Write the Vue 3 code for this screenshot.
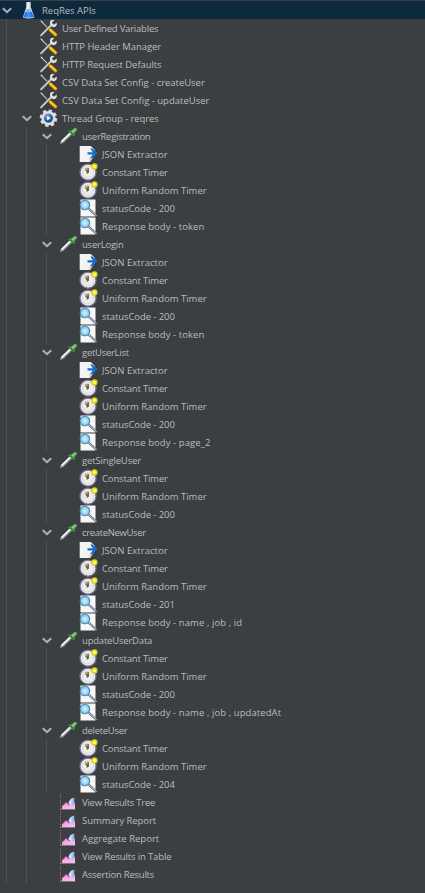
<script setup>
const leaf = (icon, label, tracking) => ({ icon, label, tracking, depth: 3 })
const json = leaf('json', 'JSON Extractor', 0.04)
const timers = [leaf('timer', 'Constant Timer', -0.16), leaf('timer', 'Uniform Random Timer', 0)]
const status = (code) => leaf('assert', `statusCode - ${code}`, -0.08)
const body = (fields) => leaf('assert', `Response body - ${fields}`, 0.08)
const sampler = (label, tracking, children) => [
  { icon: 'sampler', label, tracking, depth: 2, open: true },
  ...children,
]

// tracking: letter spacing of the label, in pixels
const rows = [
  { icon: 'plan', label: 'ReqRes APIs', tracking: -0.03, depth: 0, open: true, selected: true },
  ...[
    ['User Defined Variables', -0.21],
    ['HTTP Header Manager', -0.05],
    ['HTTP Request Defaults', -0.07],
    ['CSV Data Set Config - createUser', -0.03],
    ['CSV Data Set Config - updateUser', 0],
  ].map(([label, tracking]) => ({ icon: 'config', label, tracking, depth: 1 })),
  { icon: 'group', label: 'Thread Group - reqres', tracking: -0.1, depth: 1, open: true },
  ...sampler('userRegistration', -0.27, [json, ...timers, status(200), body('token')]),
  ...sampler('userLogin', -0.22, [json, ...timers, status(200), body('token')]),
  ...sampler('getUserList', -0.28, [json, ...timers, status(200), body('page_2')]),
  ...sampler('getSingleUser', -0.15, [...timers, status(200)]),
  ...sampler('createNewUser', -0.35, [json, ...timers, status(201), body('name , job , id')]),
  ...sampler('updateUserData', -0.2, [...timers, status(200), body('name , job , updatedAt')]),
  ...sampler('deleteUser', -0.3, [...timers, status(204)]),
  ...[
    ['View Results Tree', -0.25],
    ['Summary Report', -0.06],
    ['Aggregate Report', 0],
    ['View Results in Table', -0.14],
    ['Assertion Results', -0.23],
  ].map(([label, tracking]) => ({ icon: 'report', label, tracking, depth: 2, listener: true })),
]
</script>

<template>
  <main class="tree">
    <svg class="defs" width="0" height="0" aria-hidden="true">
      <defs>
        <linearGradient id="flask" x1="0" x2="1">
          <stop offset="0" stop-color="#1c62d4" /><stop offset=".5" stop-color="#3b9bff" /><stop offset="1" stop-color="#1559cd" />
        </linearGradient>
        <radialGradient id="lens"><stop offset="0" stop-color="#d9f5ff" /><stop offset="1" stop-color="#79c2ea" /></radialGradient>
        <radialGradient id="ball" cx=".4" cy=".35"><stop offset="0" stop-color="#9cc5ef" /><stop offset="1" stop-color="#164a91" /></radialGradient>
        <linearGradient id="pink" x1="0" x2="1" y2="1"><stop offset="0" stop-color="#ee98de" /><stop offset="1" stop-color="#ffc0f2" /></linearGradient>
        <linearGradient id="blue" x1="0" x2="1"><stop offset="0" stop-color="#f2f8ff" /><stop offset="1" stop-color="#80abe5" /></linearGradient>
      </defs>
    </svg>
    <div v-for="(row, i) in rows" :key="i" class="row" :class="{ selected: row.selected }">
      <span v-for="g in row.depth" :key="g" class="guide" :class="{ hidden: row.listener && g === 3 }" />
      <span class="toggle">
        <svg v-if="row.open" width="10" height="7" viewBox="0 0 10 7"><path d="M.8 1.2 5 5.2 9.2 1.2" fill="none" stroke="#b0b2b4" stroke-width="2" /></svg>
      </span>
      <svg class="icon" width="20" height="18" viewBox="0 0 20 18">
        <g v-if="row.icon === 'plan'">
          <path d="M7.3 1h4.4v5l3.8 10.5q-6 1.8-11.7 0L7.3 6z" fill="#d5dde6" />
          <path d="M8.4 2h1.2v5l-2 5h-1l1.8-5z" fill="#fff" />
          <path d="M6.2 11h6.7l1.9 5q-5 1.4-10.2 0z" fill="url(#flask)" />
          <path d="M7.5 8h4l1.2 3H6.4z" fill="#8db5de" />
        </g>
        <g v-else-if="row.icon === 'config'">
          <path d="m2 2.2 8.5 8.5" stroke="#c9c9c7" stroke-width="1.1" />
          <path d="m.8 1.6 2.2.3 1.3 2z" fill="#f2f2ef" />
          <path d="M2 16.4 13 5.3" stroke="#737576" stroke-width="2.6" stroke-linecap="round" />
          <path d="M2 16.4 13 5.3" stroke="#dcdcd9" stroke-width="1.3" stroke-linecap="round" />
          <path d="M15.5 1.2q-3.5-1.5-4.6 1.8l.2 3.2 2.4 1.9q3.6.5 4.4-2.4l-.3-2.1-2.5 1.8-1.8-.6-.2-1.6z" fill="#dededb" />
          <path d="m11.5 11.2 5 4.6" stroke="#c78a05" stroke-width="3.3" stroke-linecap="round" />
          <path d="m11.4 10.8 5.1 4.7" stroke="#ffc719" stroke-width="2.3" stroke-linecap="round" />
        </g>
        <g v-else-if="row.icon === 'group'">
          <circle cx="9.5" cy="9.2" r="7.4" fill="none" stroke="#d7dadd" stroke-width="2.8" stroke-dasharray="3.3 2.5" />
          <circle cx="9.5" cy="9.2" r="7.2" fill="#dde1e4" />
          <circle cx="9.5" cy="9.2" r="4.9" fill="#a5b2c0" />
          <circle cx="9.5" cy="9.2" r="4.2" fill="url(#ball)" />
          <path d="m8.2 7 3.4 2.2-3.4 2.2z" fill="#f2f8ff" />
        </g>
        <g v-else-if="row.icon === 'sampler'">
          <path d="m.8 17.2 1.2-3.5L11 5l2.3 2.2-8.5 8.4z" fill="#a5a9a9" />
          <path d="m2.6 14.6 8.6-8.2" stroke="#f6f8f7" stroke-width="1.6" />
          <path d="m4.4 15.2 7.8-7.6" stroke="#65706f" stroke-width=".6" />
          <path d="m9.2 4.4 1.5-1.4 2 .2L15 1q3.4-1 3.4 1.8L15.9 6l.2 1.9-1.4 1.4z" fill="#43883f" />
          <path d="m12.2 4.6 3.4-3.2 2.1.7-3.4 4.2z" fill="#8bcb7b" />
        </g>
        <g v-else-if="row.icon === 'json'">
          <path d="M.7 1h11l3.8 3.5v6L11 17H.7z" fill="#f4f4f4" />
          <path d="m9.5 17 1.5-5 4.5-1.5z" fill="#c5c6c9" />
          <path d="M8.5 7.2h5.2L11.6 4l1.3-1L18.6 8.3l-5.7 5.1-1.3-1 2.1-3H8.5z" fill="#176dcc" />
        </g>
        <g v-else-if="row.icon === 'timer'">
          <circle cx="9" cy="9.2" r="8" fill="#eeeef5" stroke="#76728d" stroke-width="1.3" />
          <circle cx="9" cy="9.2" r="5.6" fill="#eeeee8" stroke="#cbcbd6" stroke-width=".7" />
          <path d="m5.2 5 4-.3v4.8z" fill="#c4ac62" />
          <path d="M9.2 5v4.4l-1.7 1M9.2 9.4 6.5 6.8" fill="none" stroke="#4c492f" stroke-width="1.1" />
          <circle cx="15.5" cy="3.4" r="3.1" fill="#d7cf24" /><circle cx="15.5" cy="3.4" r="1.9" fill="#fff84a" />
        </g>
        <g v-else-if="row.icon === 'assert'">
          <path d="M1.5 .5h15v17h-15z" fill="#f7f7f7" />
          <path d="m9.8 9.8 8 7.2" stroke="#58616a" stroke-width="2.2" /><path d="m9.8 9.8 7.6 6.7" stroke="#c9d1d6" stroke-width="1" />
          <circle cx="5.9" cy="6" r="4.8" fill="url(#lens)" stroke="#4788b3" stroke-width="1.1" />
        </g>
        <g v-else>
          <path d="M1.5 1v15.5" stroke="#85888a" stroke-width=".8" stroke-dasharray="1 1" />
          <path d="M1 16.5h15.5" stroke="#85888a" stroke-width=".8" />
          <path d="M3 16v-2.5l4-4 3 2.5 6-2.5V16z" fill="url(#pink)" />
          <path d="m3 13.3 4-4 3 2.7" fill="none" stroke="#b04a9c" stroke-width=".9" />
          <path d="M9.5 10.8q.5-5.3 5.8-6.3v7.3q-3.3 1.3-5.8-1z" fill="url(#blue)" />
        </g>
      </svg>
      <span class="label" :style="{ letterSpacing: row.tracking + 'px' }">{{ row.label }}</span>
    </div>
  </main>
</template>

<style>
body {
  margin: 0;
  background: #3c3f41;
}
</style>

<style scoped>
.tree {
  box-sizing: border-box;
  height: 893px;
  padding-top: 1px;
  overflow: hidden;
  background: #3c3f41;
  color: #bbb;
  font-family: "Open Sans", "Noto Sans", sans-serif;
  font-size: 9.5px;
}
.defs {
  position: absolute;
}
.row {
  display: flex;
  align-items: center;
  height: 18px;
}
.selected {
  background: #0d293e;
}
.guide {
  box-sizing: border-box;
  flex: 0 0 20px;
  height: 18px;
  padding-left: 6px;
}
.guide::before {
  content: "";
  display: block;
  width: 1px;
  height: 100%;
  background: #505355;
}
.hidden {
  visibility: hidden;
}
.toggle {
  display: flex;
  flex: 0 0 19px;
  align-items: center;
  padding-left: 2px;
  box-sizing: border-box;
}
.icon {
  flex: none;
}
.label {
  padding: 1px 0 0 3px;
  line-height: 18px;
  white-space: pre;
}
</style>
